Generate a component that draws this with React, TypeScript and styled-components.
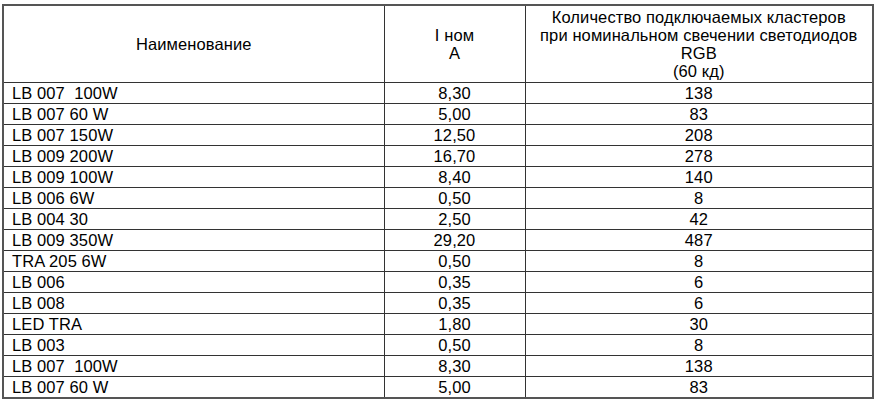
import React from 'react';
import { styled, createGlobalStyle, css } from 'styled-components';

const GlobalStyle = createGlobalStyle`
  html, body {
    margin: 0;
    padding: 0;
    background: #fff;
  }
`;

const textStyle = css`
  font-family: 'Liberation Sans', Arial, sans-serif;
  font-size: 16.5px;
  letter-spacing: 0.1px;
  color: #000;
`;

const Page = styled.div`
  padding: 4px 0 0 2px;
`;

const Table = styled.table`
  width: 870px;
  border-collapse: collapse;
  table-layout: fixed;
  border: 2px solid #555;
`;

const HeadCell = styled.th`
  ${textStyle};
  height: 76px;
  padding: 0;
  font-weight: normal;
  text-align: center;
  vertical-align: middle;
  line-height: 18px;
  border: 1px solid #333;
`;

const Cell = styled.td<{ $align?: 'left' | 'center' }>`
  ${textStyle};
  height: 20px;
  padding: 0 0 0 ${p => (p.$align === 'left' ? '8px' : '0')};
  text-align: ${p => p.$align ?? 'center'};
  vertical-align: middle;
  line-height: 18px;
  white-space: pre;
  border: 1px solid #333;
`;

type Row = { name: string; current: string; clusters: string };

const rows: Row[] = [
  { name: 'LB 007  100W', current: '8,30', clusters: '138' },
  { name: 'LB 007 60 W', current: '5,00', clusters: '83' },
  { name: 'LB 007 150W', current: '12,50', clusters: '208' },
  { name: 'LB 009 200W', current: '16,70', clusters: '278' },
  { name: 'LB 009 100W', current: '8,40', clusters: '140' },
  { name: 'LB 006 6W', current: '0,50', clusters: '8' },
  { name: 'LB 004 30', current: '2,50', clusters: '42' },
  { name: 'LB 009 350W', current: '29,20', clusters: '487' },
  { name: 'TRA 205 6W', current: '0,50', clusters: '8' },
  { name: 'LB 006', current: '0,35', clusters: '6' },
  { name: 'LB 008', current: '0,35', clusters: '6' },
  { name: 'LED TRA', current: '1,80', clusters: '30' },
  { name: 'LB 003', current: '0,50', clusters: '8' },
  { name: 'LB 007  100W', current: '8,30', clusters: '138' },
  { name: 'LB 007 60 W', current: '5,00', clusters: '83' },
];

const App: React.FC = () => (
  <>
    <GlobalStyle />
    <Page>
      <Table>
        <colgroup>
          <col style={{ width: 381 }} />
          <col style={{ width: 141 }} />
          <col style={{ width: 348 }} />
        </colgroup>
        <thead>
          <tr>
            <HeadCell>Наименование</HeadCell>
            <HeadCell>
              I ном
              <br />
              A
            </HeadCell>
            <HeadCell>
              Количество подключаемых кластеров
              <br />
              при номинальном свечении светодиодов
              <br />
              RGB
              <br />
              (60 кд)
            </HeadCell>
          </tr>
        </thead>
        <tbody>
          {rows.map((row, i) => (
            <tr key={i}>
              <Cell $align="left">{row.name}</Cell>
              <Cell>{row.current}</Cell>
              <Cell>{row.clusters}</Cell>
            </tr>
          ))}
        </tbody>
      </Table>
    </Page>
  </>
);

export default App;
